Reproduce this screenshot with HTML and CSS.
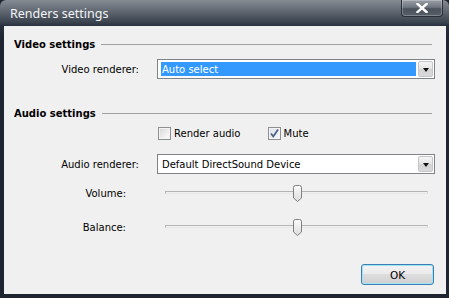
FILE: index.html
```html
<!DOCTYPE html>
<html>
<head>
<meta charset="utf-8">
<link rel="stylesheet" href="styles.css">
</head>
<body>
<div class="window">
  <div class="titlebar">
    <span class="title">Renders settings</span>
    <div class="close">
      <svg width="16" height="10" viewBox="0 0 16 10"><path d="M3.5 1 L12.5 9 M12.5 1 L3.5 9" stroke="#fff" stroke-width="2.4" stroke-linecap="square"/></svg>
    </div>
  </div>
  <div class="client">
    <div class="group-head head-video"><span>Video settings</span><i class="rule"></i></div>
    <div class="row row-video">
      <label class="lbl">Video renderer:</label>
      <div class="combo">
        <div class="combo-value selected">Auto select</div>
        <div class="combo-btn"><i class="tri"></i></div>
      </div>
    </div>

    <div class="group-head head-audio"><span>Audio settings</span><i class="rule"></i></div>
    <div class="row row-checks">
      <span class="lbl"></span>
      <div class="checks">
        <label class="check"><span class="box"></span>Render audio</label>
        <label class="check mute"><span class="box checked"><svg width="11" height="11" viewBox="0 0 11 11"><path d="M2 5.5 L4.3 8.5 L9 1.5" stroke="#4d6185" stroke-width="1.8" fill="none"/></svg></span>Mute</label>
      </div>
    </div>
    <div class="row row-audio">
      <label class="lbl">Audio renderer:</label>
      <div class="combo">
        <div class="combo-value">Default DirectSound Device</div>
        <div class="combo-btn"><i class="tri"></i></div>
      </div>
    </div>
    <div class="row slider-row row-volume">
      <label class="lbl lbl-slider">Volume:</label>
      <div class="slider">
        <div class="track"></div>
        <svg class="thumb" width="11" height="17" viewBox="0 0 11 17"><path d="M1.5 2.5 Q1.5 0.5 3.5 0.5 L7.5 0.5 Q9.5 0.5 9.5 2.5 L9.5 13 L5.5 16.5 L1.5 13 Z" fill="url(#tg)" stroke="#7f7f7f"/><defs><linearGradient id="tg" x1="0" x2="0" y1="0" y2="1"><stop offset="0" stop-color="#fbfbfb"/><stop offset="1" stop-color="#dcdcdc"/></linearGradient></defs></svg>
      </div>
    </div>
    <div class="row slider-row row-balance">
      <label class="lbl lbl-slider">Balance:</label>
      <div class="slider">
        <div class="track"></div>
        <svg class="thumb" width="11" height="17" viewBox="0 0 11 17"><path d="M1.5 2.5 Q1.5 0.5 3.5 0.5 L7.5 0.5 Q9.5 0.5 9.5 2.5 L9.5 13 L5.5 16.5 L1.5 13 Z" fill="url(#tg)" stroke="#7f7f7f"/></svg>
      </div>
    </div>
    <div class="footer">
      <button class="ok">OK</button>
    </div>
  </div>
</div>
</body>
</html>
```
FILE: styles.css
```css
* { box-sizing: border-box; }
html, body { margin: 0; padding: 0; }
body {
  width: 449px;
  height: 298px;
  overflow: hidden;
  background: #1f2431;
  font-family: "DejaVu Sans", sans-serif;
  font-size: 10px;
  color: #000;
}
.window {
  width: 449px;
  height: 298px;
  display: flex;
  flex-direction: column;
  background: linear-gradient(to bottom, #868c94 0px, #646b74 10px, #3c4450 22px, #27303c 26px, #1f2431 40px);
  border-radius: 6px 6px 0 0;
  padding: 0 3px 4px 4px;
}
.titlebar {
  height: 26px;
  flex: none;
  display: flex;
  align-items: flex-start;
  justify-content: space-between;
}
.title {
  font-family: "Noto Sans", "Open Sans", sans-serif;
  font-size: 12.5px;
  color: #f2f4f6;
  margin: 6px 0 0 6px;
  line-height: 16px;
}
.close {
  width: 42px;
  height: 17px;
  margin-right: 3px;
  border: 1px solid #2a2f38;
  border-top: none;
  border-radius: 0 0 4px 4px;
  background: linear-gradient(to bottom, #9aa0a7 0%, #6f767f 45%, #4b525c 55%, #565e68 100%);
  box-shadow: inset 0 0 0 1px rgba(255,255,255,0.25);
  display: flex;
  align-items: center;
  justify-content: center;
}
.close svg { display: block; }
.client {
  flex: 1;
  background: #f0f0f0;
  display: flex;
  flex-direction: column;
  padding: 0 11px 0 10px;
}
.group-head {
  display: flex;
  align-items: center;
  height: 14px;
  font-weight: bold;
  font-size: 10px;
}
.group-head .rule {
  flex: 1;
  height: 1px;
  background: #a0a0a0;
  margin: 1px 3px 0 6px;
}
.head-video { margin-top: 11px; }
.head-audio { margin-top: 27px; }
.row {
  display: grid;
  grid-template-columns: 125px 1fr;
  column-gap: 18px;
  align-items: center;
}
.lbl { text-align: right; white-space: nowrap; }
.lbl-slider { padding-right: 13px; }
.row-video { margin-top: 8px; }
.row-checks { margin-top: 7px; }
.row-audio { margin-top: 14px; }
.row-volume { margin-top: 11px; }
.row-balance { margin-top: 17px; }
.combo {
  height: 20px;
  border: 1px solid #7f8387;
  background: #fff;
  display: flex;
  align-items: stretch;
  padding: 2px 1px 2px 3px;
}
.combo-value {
  flex: 1;
  display: flex;
  align-items: center;
  padding-left: 1px;
  margin-right: 2px;
}
.combo-value.selected {
  background: #3399ff;
  color: #fff;
}
.combo-btn {
  width: 15px;
  margin: -1px 0;
  border: 1px solid #c6c6c6;
  border-radius: 2px;
  background: linear-gradient(to bottom, #f5f5f5, #e4e4e4 50%, #d4d4d4 51%, #d9d9d9);
  display: flex;
  align-items: center;
  justify-content: center;
}
.tri {
  width: 0;
  height: 0;
  border-left: 3.5px solid transparent;
  border-right: 3.5px solid transparent;
  border-top: 4px solid #111;
  margin-top: 1px;
}
.checks {
  display: flex;
  gap: 27px;
  height: 13px;
  align-items: center;
  padding-left: 1px;
}
.check {
  display: flex;
  align-items: center;
  gap: 3px;
  font-size: 10px;
}
.box {
  width: 13px;
  height: 13px;
  border: 1px solid #8e8f8f;
  background: linear-gradient(135deg, #d6d6d6, #f4f4f4 70%, #fdfdfd);
  box-shadow: inset 0 0 0 1px #f4f4f4;
  display: flex;
  align-items: center;
  justify-content: center;
}
.box.checked { background: linear-gradient(135deg, #dbe2ec, #f6f8fb); }
.box svg { display: block; }
.slider {
  position: relative;
  height: 17px;
}
.track {
  position: absolute;
  left: 8px;
  right: 7px;
  top: 6px;
  height: 3px;
  border-top: 1px solid #b4b4b4;
  border-bottom: 1px solid #e8e8e8;
  border-left: 1px solid #b4b4b4;
  border-right: 1px solid #d8d8d8;
}
.thumb {
  position: absolute;
  left: 135px;
  top: 0;
}
.footer {
  display: flex;
  justify-content: flex-end;
  margin-top: 28px;
}
.ok {
  width: 73px;
  height: 21px;
  margin-right: 1px;
  border: 1px solid #3c7fb1;
  border-radius: 3px;
  background: linear-gradient(to bottom, #f3f3f3 0%, #ebebeb 45%, #dddddd 50%, #cfcfcf 100%);
  box-shadow: inset 0 0 0 1px #9fe3f8;
  font-family: "DejaVu Sans", sans-serif;
  font-size: 10.5px;
  color: #000;
  padding: 0;
}
```
